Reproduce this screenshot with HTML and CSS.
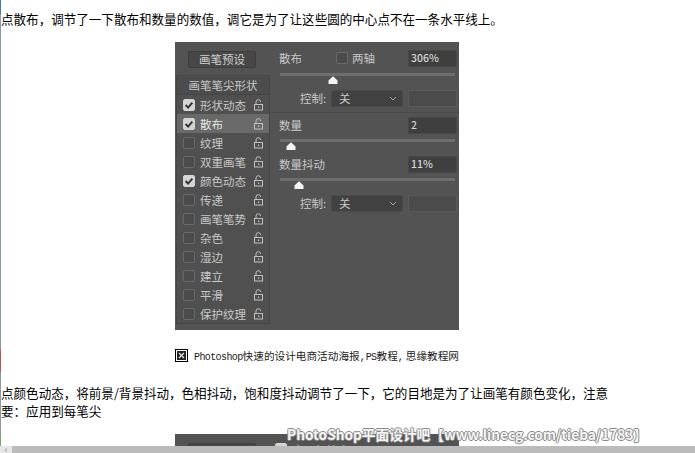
FILE: index.html
```html
<!DOCTYPE html>
<html lang="zh">
<head>
<meta charset="utf-8">
<title>Photoshop</title>
<link rel="stylesheet" href="styles.css">
</head>
<body>
<svg width="0" height="0" class="defs">
  <symbol id="lock" viewBox="0 0 11 12"><path d="M3 5V3a2.3 2.3 0 0 1 4.6 0" fill="none" stroke="currentColor"/><rect x="1.5" y="5.5" width="8" height="5.5" fill="none" stroke="currentColor"/><rect x="5" y="7.5" width="1.2" height="1.5" fill="currentColor"/></symbol>
  <symbol id="check" viewBox="0 0 12 12"><path d="M2.6 6l2.5 2.6 4.2-5" fill="none" stroke="#333" stroke-width="2"/></symbol>
  <symbol id="thumb" viewBox="0 0 10 8"><path d="M5 .3 9.5 4.5V8H.5V4.5z" fill="#f4f4f4"/></symbol>
  <symbol id="chev" viewBox="0 0 8 5"><path d="M1 1l3 3 3-3" fill="none" stroke="#a5a5a5"/></symbol>
</svg>
<div class="page">
  <main class="content">
    <p class="para">点散布，调节了一下散布和数量的数值，调它是为了让这些圆的中心点不在一条水平线上。</p>
    <div class="panel">
      <div class="side">
        <div class="preset">画笔预设</div>
        <ul class="list">
          <li class="list-head">画笔笔尖形状</li>
          <li class="row"><span class="box on"><svg><use href="#check"/></svg></span><span class="name">形状动态</span><svg class="lock"><use href="#lock"/></svg></li>
          <li class="row active"><span class="box on"><svg><use href="#check"/></svg></span><span class="name">散布</span><svg class="lock"><use href="#lock"/></svg></li>
          <li class="row"><span class="box"></span><span class="name">纹理</span><svg class="lock"><use href="#lock"/></svg></li>
          <li class="row"><span class="box"></span><span class="name">双重画笔</span><svg class="lock"><use href="#lock"/></svg></li>
          <li class="row"><span class="box on"><svg><use href="#check"/></svg></span><span class="name">颜色动态</span><svg class="lock"><use href="#lock"/></svg></li>
          <li class="row"><span class="box"></span><span class="name">传递</span><svg class="lock"><use href="#lock"/></svg></li>
          <li class="row"><span class="box"></span><span class="name">画笔笔势</span><svg class="lock"><use href="#lock"/></svg></li>
          <li class="row"><span class="box"></span><span class="name">杂色</span><svg class="lock"><use href="#lock"/></svg></li>
          <li class="row"><span class="box"></span><span class="name">湿边</span><svg class="lock"><use href="#lock"/></svg></li>
          <li class="row"><span class="box"></span><span class="name">建立</span><svg class="lock"><use href="#lock"/></svg></li>
          <li class="row"><span class="box"></span><span class="name">平滑</span><svg class="lock"><use href="#lock"/></svg></li>
          <li class="row"><span class="box"></span><span class="name">保护纹理</span><svg class="lock"><use href="#lock"/></svg></li>
        </ul>
      </div>
      <div class="controls">
        <div class="field">
          <span class="label short">散布</span>
          <span class="axis"><span class="box"></span>两轴</span>
          <span class="value">306%</span>
        </div>
        <div class="slider first"><svg class="thumb" style="left:48px"><use href="#thumb"/></svg></div>
        <div class="ctrl">
          <span class="ctrl-label">控制:</span>
          <span class="select">关<svg class="chev"><use href="#chev"/></svg></span>
          <span class="value blank"></span>
        </div>
        <div class="divider"></div>
        <div class="field">
          <span class="label">数量</span>
          <span class="value">2</span>
        </div>
        <div class="slider"><svg class="thumb" style="left:6px"><use href="#thumb"/></svg></div>
        <div class="field">
          <span class="label">数量抖动</span>
          <span class="value">11%</span>
        </div>
        <div class="slider"><svg class="thumb" style="left:14px"><use href="#thumb"/></svg></div>
        <div class="ctrl">
          <span class="ctrl-label">控制:</span>
          <span class="select">关<svg class="chev"><use href="#chev"/></svg></span>
          <span class="value blank"></span>
        </div>
      </div>
    </div>
    <div class="caption">
      <svg class="broken" viewBox="0 0 13 13"><rect x=".5" y=".5" width="12" height="12" fill="#fff" stroke="#000"/><rect x="2" y="2" width="9" height="9" fill="#222"/><path d="M4 4l5 5M9 4l-5 5" stroke="#ddd" stroke-width="1.4"/></svg>
      <span><span class="latin">Photoshop</span>快速的设计电商活动海报<span class="latin tighter">, </span><span class="latin">PS</span>教程<span class="latin tight">, </span>思缘教程网</span>
    </div>
    <p class="para second">点颜色动态，将前景/背景抖动，色相抖动，饱和度抖动调节了一下，它的目地是为了让画笔有颜色变化，注意要：应用到每笔尖</p>
    <div class="panel clipped">
      <div class="side"><div class="preset">画笔预设</div></div>
      <div class="apply"><span class="box on"><svg><use href="#check"/></svg></span>应用每笔尖</div>
    </div>
  </main>
  <div class="scrollbar"><span class="arrow">‹</span></div>
  <div class="watermark">PhotoShop平面设计吧【www.linecg.com/tieba/1783】</div>
  <div class="edge"></div>
</div>
</body>
</html>
```
FILE: styles.css
```css
* { box-sizing: border-box; }
html, body { margin: 0; height: 100%; overflow: hidden; background: #fff; }
body { font-family: "Noto Sans CJK SC", "Liberation Sans", sans-serif; color: #000; }
.defs { position: absolute; }
.page { position: relative; height: 453px; display: flex; flex-direction: column; }
.content { flex: 1; min-height: 0; overflow: hidden; padding: 10px 0 0 1px; }
.para { margin: 0; width: 614px; font-size: 12.56px; line-height: 18px; }
.second { margin-top: 20px; }

.panel { width: 284px; height: 288px; margin: 14px 0 0 174px; padding: 9px 0 0 2px; background: #535353; display: flex; color: #c8c8c8; font-size: 11.5px; }
.side { width: 92px; flex: none; }
.preset { width: 68px; height: 17px; margin-left: 11px; background: #474747; border: 1px solid #3e3e3e; border-radius: 2px; text-align: center; line-height: 15px; font-size: 11.5px; color: #d0d0d0; }
.list { list-style: none; margin: 8px 0 0; padding: 0; height: 247px; background: #505050; box-shadow: 0 0 0 1px #464646; }
.list-head { height: 19px; line-height: 18px; text-align: center; background: #4c4c4c; border-bottom: 1px solid #454545; }
.row { height: 19px; display: flex; align-items: center; padding-left: 6px; }
.active { background: #696969; color: #e4e4e4; }
.box { width: 12px; height: 12px; flex: none; display: block; border-radius: 2px; background: #4b4b4b; border: 1px solid #696969; }
.box svg { display: block; width: 12px; height: 12px; margin: -1px; }
.box.on { background: #d4d4d4; border-color: #d4d4d4; }
.name { margin-left: 5px; flex: 1; white-space: nowrap; }
.lock { width: 11px; height: 12px; margin-right: 5px; flex: none; color: #c0c0c0; }

.controls { width: 180px; margin: -1px 0 0 10px; flex: none; }
.field { height: 17px; display: flex; align-items: center; }
.label { flex: 1; padding-bottom: 2px; }
.label.short { flex: none; width: 57px; }
.axis { display: flex; align-items: center; gap: 4px; width: 72px; padding-bottom: 1px; }
.value { width: 49px; height: 17px; margin-right: 2px; flex: none; background: #3f3f3f; border: 1px solid #484848; padding-left: 2px; font-size: 10.5px; line-height: 13px; font-weight: 500; color: #d4d4d4; }
.blank { background: #4b4b4b; border-color: #5a5a5a; }
.slider { position: relative; height: 12px; margin: 5px 4px 5px 1px; border-top: 3px solid #6d6d6d; }
.slider.first { margin-top: 6px; }
.thumb { position: absolute; top: 0; width: 10px; height: 8px; }
.ctrl { height: 17px; display: flex; align-items: center; }
.ctrl-label { width: 52px; padding: 0 0 2px 21px; white-space: nowrap; flex: none; }
.select { width: 72px; height: 17px; margin-right: 5px; flex: none; position: relative; padding-left: 7px; background: #414141; border: 1px solid #4a4a4a; border-radius: 2px; line-height: 14px; }
.chev { position: absolute; right: 5px; top: 5px; width: 8px; height: 5px; }
.divider { height: 1px; margin: 5px 0 4px -9px; background: #4a4a4a; }

.caption { height: 18px; margin: 16px 0 0 174px; display: flex; align-items: center; gap: 6px; font-size: 10.65px; color: #222; white-space: nowrap; }
.broken { width: 13px; height: 13px; flex: none; }
.latin { font-family: "Liberation Mono", monospace; font-size: 10px; letter-spacing: -0.6px; }
.latin.tight { letter-spacing: -2px; }
.latin.tighter { letter-spacing: -3px; }

.clipped { margin-top: 14px; }
.apply { margin-left: 6px; display: flex; gap: 5px; height: 14px; line-height: 14px; }

.scrollbar { height: 7px; flex: none; background: #bbb; }
.arrow { display: block; width: 12px; height: 7px; background: #e6e6e6; color: #777; font-size: 9px; line-height: 7px; text-align: center; }
.watermark { position: absolute; left: 287px; top: 424px; font-size: 13.7px; font-weight: 700; line-height: 20px; white-space: nowrap; color: #f4f4f4; text-shadow: 1px 0 0 #8a8a8a, -1px 0 0 #8a8a8a, 0 1px 0 #8a8a8a, 0 -1px 0 #8a8a8a; }
.edge { position: absolute; left: 0; top: 0; width: 1px; height: 446px; background: linear-gradient(#3f7fb0 0 14px, #8a9aa5 14px 350px, #b5564a 350px 372px, #8f9a9f 372px 435px, #6fa86a 435px); }
```
